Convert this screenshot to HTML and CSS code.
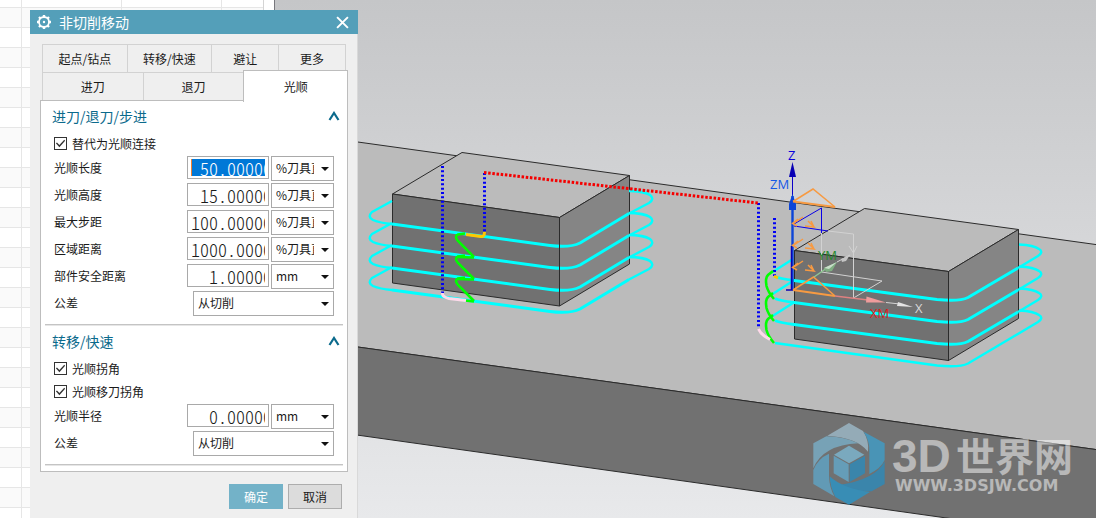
FILE: index.html
```html
<!DOCTYPE html>
<html lang="zh-CN">
<head>
<meta charset="utf-8">
<title>非切削移动</title>
<link rel="stylesheet" href="styles.css">
</head>
<body>
<main class="workspace">
  <div class="sheet"><div class="sheet-grid"></div></div>

  <div class="viewport">
    <svg class="scene" viewBox="275 0 821 518" preserveAspectRatio="xMinYMin slice" aria-label="刀轨">
      <defs>
        <linearGradient id="sky" x1="0" y1="0" x2="0" y2="1">
          <stop offset="0" stop-color="#c5c6c8"/>
          <stop offset="1" stop-color="#e8e9eb"/>
        </linearGradient>
        <g id="loop1" fill="none" stroke="#00ffff" stroke-linejoin="round">
          <path stroke-width="2.4" d="M629 191C638 191 647 193 650 195Q655 199 649 203L629 213.500M392 201L372 212Q367 217 373 220Q380 223 392 224"/>
          <path stroke-width="3" d="M392 224L550 245.500C562 247 572 247 580 243L629 213.500"/>
        </g>
        <g id="loop2" fill="none" stroke="#00ffff" stroke-linejoin="round">
          <path stroke-width="2.400" d="M1019 244.500C1028 245 1035 246 1039 249Q1044 252 1038 256L1018 268M793 259L771 273"/>
          <path stroke-width="3" d="M775 276.500Q779 278.500 794 280.500L937 299.500C952 301 961 301 968 297.500L1018 268"/>
        </g>
        <path id="step1" d="M474 257L458 241Q454 236 458 234.500L465 233.500"/>
        <path id="link1" d="M457 257L474 257.500"/>
        <path id="step2" d="M773 271L768 275Q765 278 766.500 286Q768 292 774 299"/>
        <g id="turn">
          <path d="M792.500 224L803 217M797 226L792.500 223.500L798 219M808 221L814 227L805 226M814 227L811 221"/>
        </g>
      </defs>
      <rect x="275" width="821" height="518" fill="url(#sky)"/>
      <g stroke="#2b2b2b" stroke-width="1" stroke-linejoin="round">
        <path fill="#bbbbbb" d="M275 130.500L1110 246.500V451.500L275 335.500Z"/>
        <path fill="#717171" d="M275 335.500L1110 451.500V541L275 423.500Z"/>
        <path fill="#bbbbbb" d="M392.500 194L462 152.500L629.500 175.500L559.500 217.500Z"/>
        <path fill="#717171" d="M392.500 194L559.500 217.500V306L392.500 283Z"/>
        <path fill="#858585" d="M559.500 217.500L629.500 175.500V264L559.500 306Z"/>
        <path fill="#bbbbbb" d="M794.500 250.500L864.500 208.500L1018.500 229.500L948.500 271.500Z"/>
        <path fill="#717171" d="M794.500 250.500L948.500 271.500V360.500L794.500 339Z"/>
        <path fill="#858585" d="M948.500 271.500L1018.500 229.500V318.500L948.500 360.500Z"/>
      </g>
      <use href="#loop1"/><use href="#loop1" y="22"/><use href="#loop1" y="44"/><use href="#loop1" y="66"/>
      <use href="#loop2"/><use href="#loop2" y="22"/><use href="#loop2" y="44"/>
      <path fill="none" stroke="#00ffff" stroke-width="2.400" d="M1019 310.500C1028 311 1035 312 1039 315Q1044 318 1038 322L968 363.500C961 367 952 367 937 365.500L775 343"/>
      <path stroke="#2b2b2b" d="M559.500 217.500V306M948.500 271.500V360.500"/>
      <g fill="none" stroke="#0000f5" stroke-width="3" stroke-dasharray="2 2.330">
        <path d="M442.500 166V293M484.500 173V234M758.500 203V328M774.500 218V276"/>
        <path stroke="#f50000" stroke-dasharray="2.500 1.700" d="M484 172.500L758 203"/>
      </g>
      <g fill="none" stroke="#00ff00" stroke-width="2.600">
        <use href="#step1"/><use href="#step1" y="22"/><use href="#step1" y="44"/>
        <use href="#link1"/><use href="#link1" y="22"/>
        <path d="M465 300.500L474 301.500"/>
        <use href="#step2"/><use href="#step2" y="22"/><use href="#step2" y="44"/>
      </g>
      <g fill="none" stroke-width="3">
        <path stroke="#ffc800" d="M466 234.500L481 236.500Q484.500 237 484.500 232M774 276L778 278"/>
        <path stroke="#ffd9ea" d="M442.500 293Q442 297 449 298.500L466 300.500M758.500 329Q761 335 770 339.500"/>
      </g>
      <g fill="none" stroke="#d2d2d2">
        <path d="M821.500 233V272L882 281L853.500 298V234L828 231"/>
        <path d="M849 246L853.500 253L857 246M853.500 253V258"/>
      </g>
      <path fill="none" stroke="#0a00e6" d="M794 224L821.500 208V233M794 226L828 231"/>
      <path stroke="#0c00c8" d="M792.500 165V290"/>
      <path fill="#0800b4" d="M792.500 162L796 177H789Z"/>
      <path stroke="#0c45d8" stroke-width="2.400" d="M792.500 196V290"/>
      <path fill="#0c45d8" d="M792.500 194L796 204V210H789V204Z"/>
      <path stroke="#0800b4" stroke-width="1.500" d="M786 290H793M791.500 246V290"/>
      <g fill="none" stroke="#f79a42" stroke-width="1.500">
        <path d="M793 201.500L813 189L835 207M793 290L813.500 277L835 296"/>
        <path stroke-width="2" d="M793 201.500L835 207M793 290L835 296"/>
        <use href="#turn"/><use href="#turn" y="22"/><use href="#turn" y="44"/>
      </g>
      <path stroke="#8fc892" stroke-width="1.500" d="M814 277L827 268"/>
      <path fill="#7fae82" d="M824 268L837 262L832 271L826 272Z"/>
      <path fill="#c9dfca" d="M824 268L837 262L829 269Z"/>
      <path stroke="#d8d8d8" d="M837 262L850 255"/>
      <path fill="#c4c4c4" d="M841 259L850 255L846 261L842 262Z"/>
      <path stroke="#df8080" stroke-width="1.500" d="M835 296L868 300"/>
      <path fill="#ef9c9c" d="M866.500 296.500L886 302.500L866 302.500Z"/>
      <path stroke="#d5d5d5" d="M886 302.500L900 304"/>
      <path fill="#e4e4e4" d="M898 302L913 307L897 306Z"/>
      <g class="axis-labels">
        <text x="788" y="160" fill="#0a00dc">Z</text>
        <text x="770" y="189" fill="#1458e6">ZM</text>
        <text x="818" y="260" fill="#238a2b">YM</text>
        <text x="870" y="318" fill="#dc2020">XM</text>
        <text x="915" y="313" fill="#d8d8d8">X</text>
      </g>

      <g class="watermark">
        <g transform="translate(790 410) scale(.3333)">
          <path fill="#94abb7" d="M177 39L219 63Q238 92 234 125Q203 83 112 77Z"/>
          <path fill="#4994b6" d="M221 65L284 100V150Q274 174 238 192V127Q240 95 221 65Z"/>
          <path fill="#3a85ab" d="M284 154V222L245 244Q180 246 146 225Q256 210 284 154Z"/>
          <path fill="#388db5" d="M119 199Q160 237 240 246L177 284L136 261Q120 230 119 199Z"/>
          <path fill="#629ab5" d="M70 180Q84 145 117 131V198Q118 232 133 259L70 222Z"/>
          <path fill="#77a2b6" d="M109 79Q164 80 205 100Q99 105 70 175V100Z"/>
          <path fill="#7aa9be" d="M177 107L223 134L177 160L132 134Z"/>
          <path fill="#659db8" d="M131 137L176 163V216L131 190Z"/>
          <path fill="#3a85ab" d="M179 163L225 137V190L179 216Z"/>
        </g>
        <text class="brand" x="892" y="472">3D</text>
        <text class="brand-cjk" x="956" y="471">世界网</text>
        <text class="site" x="895" y="491">WWW.3DSJW.COM</text>
      </g>
    </svg>
  </div>

  <form class="dialog" aria-labelledby="dialog-title">
    <header class="titlebar">
      <svg class="gear" viewBox="0 0 16 16" aria-hidden="true">
        <circle cx="8" cy="8" r="5" fill="none" stroke="#fff" stroke-width="1.800"/>
        <circle cx="8" cy="8" r="1.200" fill="#fff"/>
        <path stroke="#fff" stroke-width="2.400" d="M8 1V3M8 13V15M1 8H3M13 8H15M3 3L4.500 4.500M11.500 11.500L13 13M3 13L4.500 11.500M11.500 4.500L13 3"/>
      </svg>
      <h1 id="dialog-title">非切削移动</h1>
      <button class="close" type="button" aria-label="关闭">
        <svg viewBox="0 0 12 12"><path d="M1 1L11 11M11 1L1 11" stroke="#fff" stroke-width="1.800"/></svg>
      </button>
    </header>

    <div class="tabs">
      <div class="tab-row tab-row-back">
        <button class="tab" type="button">起点/钻点</button>
        <button class="tab" type="button">转移/快速</button>
        <button class="tab" type="button">避让</button>
        <button class="tab" type="button">更多</button>
      </div>
      <div class="tab-row tab-row-front">
        <button class="tab" type="button">进刀</button>
        <button class="tab" type="button">退刀</button>
        <button class="tab tab-active" type="button">光顺</button>
      </div>
    </div>

    <div class="panel">
      <section class="group">
        <h2 class="group-title">进刀/退刀/步进
          <svg class="chevron" viewBox="0 0 12 10"><path d="M1.500 9L6 2L10.500 9" fill="none" stroke="#0b6a8c" stroke-width="2.200"/></svg>
        </h2>
        <div class="checks">
          <label class="check"><input type="checkbox" checked>替代为光顺连接</label>
        </div>
        <div class="field">
          <label for="len">光顺长度</label>
          <input id="len" class="number number-selected" type="text" value=" 50.00000">
          <span class="pick"><select aria-label="光顺长度单位"><option>%刀具直径</option></select></span>
        </div>
        <div class="field">
          <label for="height">光顺高度</label>
          <input id="height" class="number" type="text" value=" 15.00000">
          <span class="pick"><select aria-label="光顺高度单位"><option>%刀具直径</option></select></span>
        </div>
        <div class="field">
          <label for="step">最大步距</label>
          <input id="step" class="number" type="text" value="100.00000">
          <span class="pick"><select aria-label="最大步距单位"><option>%刀具直径</option></select></span>
        </div>
        <div class="field">
          <label for="area">区域距离</label>
          <input id="area" class="number" type="text" value="1000.00000">
          <span class="pick"><select aria-label="区域距离单位"><option>%刀具直径</option></select></span>
        </div>
        <div class="field">
          <label for="safe">部件安全距离</label>
          <input id="safe" class="number" type="text" value="  1.00000">
          <span class="pick"><select aria-label="部件安全距离单位"><option>mm</option></select></span>
        </div>
        <div class="field">
          <label for="tol1">公差</label>
          <span class="pick pick-wide"><select id="tol1"><option>从切削</option></select></span>
        </div>
      </section>
      <section class="group">
        <h2 class="group-title">转移/快速
          <svg class="chevron" viewBox="0 0 12 10"><path d="M1.500 9L6 2L10.500 9" fill="none" stroke="#0b6a8c" stroke-width="2.200"/></svg>
        </h2>
        <div class="checks">
          <label class="check"><input type="checkbox" checked>光顺拐角</label>
          <label class="check"><input type="checkbox" checked>光顺移刀拐角</label>
        </div>
        <div class="field">
          <label for="radius">光顺半径</label>
          <input id="radius" class="number" type="text" value="  0.00000">
          <span class="pick"><select aria-label="光顺半径单位"><option>mm</option></select></span>
        </div>
        <div class="field">
          <label for="tol2">公差</label>
          <span class="pick pick-wide"><select id="tol2"><option>从切削</option></select></span>
        </div>
      </section>
    </div>

    <footer class="actions">
      <button class="btn btn-primary" type="submit">确定</button>
      <button class="btn" type="button">取消</button>
    </footer>
  </form>
</main>
</body>
</html>
```

FILE: styles.css
```css
* { box-sizing: border-box; }

body {
  margin: 0;
  background: #fff;
  color: #1a1a1a;
  font: 12px/16px "Noto Sans CJK SC", sans-serif;
}

button, input, select { font: inherit; color: inherit; margin: 0; }

.workspace {
  position: relative;
  display: flex;
  height: 100vh;
  overflow: hidden;
}

/* Table behind the dialog */
.sheet {
  flex: none;
  width: 275px;
  padding-right: 10px;
  border-right: 1px solid #77777c;
  background: #fff;
}

.sheet-grid {
  height: 100%;
  border-right: 1px solid #d4d4d4;
  background:
    repeating-linear-gradient(to right, transparent 0 21px, #e6e6e6 21px 22px, transparent 22px 100px),
    repeating-linear-gradient(#fff 0 7px, #e6e6e6 7px 8px, #fafafa 8px 27px, #e6e6e6 27px 28px, #fff 28px 40px);
}

.viewport { flex: 1; min-width: 0; }
.scene { display: block; width: 100%; height: 100%; }

.axis-labels { font: 13px "Open Sans", sans-serif; }

.watermark { fill: #fff; fill-opacity: 0.5; }
.watermark path { fill-opacity: 1; }
.brand { font: bold 46px "Liberation Sans", sans-serif; }
.brand-cjk { font: bold 39px "Noto Sans CJK SC", sans-serif; }
.site { font: bold 16px "DejaVu Sans", sans-serif; }

/* Floating dialog window */
.dialog {
  position: absolute;
  top: 10px;
  left: 30px;
  width: 328px;
  min-height: 100%;
  background: #efefef;
  border-right: 1px solid #d9d9d9;
}

.titlebar {
  display: flex;
  align-items: center;
  gap: 7px;
  height: 24px;
  margin-right: -1px;
  padding: 0 9px 0 6px;
  background: #549fb9;
  color: #fff;
}

.titlebar h1 { flex: 1; margin: 0; font-size: 14px; font-weight: 400; }
.gear { width: 16px; height: 16px; }
.close { display: flex; padding: 0; border: 0; background: none; }
.close svg { width: 13px; height: 13px; }

.tabs { padding: 10px 9px 0 12px; }
.tab-row { display: flex; height: 28px; }
.tab-row-back { margin-right: 2px; }

.tab {
  flex: 85;
  padding: 0;
  border: solid #d2d2d2;
  border-width: 1px 0 0 1px;
  background: #efefef;
}

.tab-row-back .tab:nth-child(n+3) { flex: 67; }
.tab-row-back .tab:last-child { border-right-width: 1px; }
.tab-row-front .tab { flex: 101; }

.tab-row-front .tab-active {
  position: relative;
  z-index: 1;
  flex: 104;
  height: 32px;
  margin-top: -2px;
  border: 1px solid #bdbdbd;
  border-bottom: 0;
  background: #fff;
}

.panel {
  margin: 0 9px 0 10px;
  padding: 3px 4px 6px;
  border: 1px solid #bdbdbd;
  background: #fff;
}

.group {
  padding: 0 9px 6px;
  border-bottom: 1px solid #c4c4c4;
  box-shadow: 0 1px #e6e6e6;
}

.group + .group { padding-top: 4px; }

.group-title {
  display: flex;
  align-items: center;
  justify-content: space-between;
  height: 24px;
  margin: 0 -6px 4px -2px;
  color: #0b6a8c;
  font-size: 14px;
  font-weight: 400;
}

.chevron { width: 12px; height: 10px; }

.checks { padding-bottom: 1px; }

.check {
  display: flex;
  align-items: center;
  gap: 5px;
  height: 23px;
}

.check input {
  appearance: none;
  display: grid;
  width: 13px;
  height: 13px;
  border: 1px solid #333;
  background: #fff;
}

.check input:checked::before {
  content: "";
  background: #333;
  clip-path: polygon(8% 48%, 18% 40%, 40% 64%, 84% 16%, 92% 26%, 40% 84%);
}

.field {
  display: flex;
  align-items: flex-start;
  gap: 2px;
  height: 27px;
}

.field label { flex: 1; padding-top: 4px; }

.number {
  width: 82px;
  height: 23px;
  padding: 2px 3px;
  border: 1px solid #a9a9a9;
  outline: 0;
  background: #fff;
  font: 300 18px/17px "Noto Sans CJK SC", monospace;
  font-feature-settings: "hwid";
}

.number-selected {
  background: linear-gradient(to right, #f08030 1px, #0078d7 1px) content-box, #fff;
  color: #fff;
}

.pick { display: grid; width: 63px; height: 25px; }
.pick-wide { width: 141px; }

.pick select, .pick::after { grid-area: 1 / 1; }

.pick::after {
  content: "";
  place-self: center end;
  margin-right: 5px;
  border: solid transparent;
  border-width: 4px 4px 0;
  border-top-color: #111;
  pointer-events: none;
}

.pick select {
  appearance: none;
  width: 100%;
  padding: 0 19px 2px 4px;
  border: 1px solid #a9a9a9;
  border-radius: 0;
  background: #fff;
  text-overflow: clip;
}

.actions {
  display: flex;
  justify-content: flex-end;
  gap: 5px;
  padding: 12px 15px;
}

.btn {
  width: 54px;
  height: 25px;
  padding: 0;
  border: 1px solid #adadad;
  background: #dcdcdc;
}

.btn-primary { border-color: #73b2c8; background: #73b2c8; color: #fff; }
```
